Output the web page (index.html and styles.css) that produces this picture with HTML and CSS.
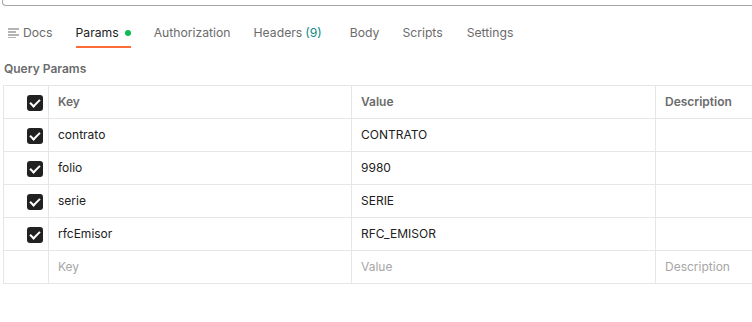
FILE: index.html
```html
<!DOCTYPE html>
<html>

<head lang="en">
    <meta charset="UTF-8">
    <title>Params</title>
    <link rel="stylesheet" href="styles.css">
</head>

<body>
    <div class="url-box"></div>

    <!-- tabs -->
    <ul class="tabs">
        <li class="tab">
            <svg class="docs-icon" width="11" height="10" viewBox="0 0 11 10">
                <path d="M0 1h11M0 4h8M0 7h11M0 10h8" stroke="#6b6b6b" stroke-width="1.2" fill="none" />
            </svg>
            Docs
        </li>
        <li class="tab active">Params <span class="dot"></span></li>
        <li class="tab">Authorization</li>
        <li class="tab">Headers <span class="count">(9)</span></li>
        <li class="tab body-tab">Body</li>
        <li class="tab">Scripts</li>
        <li class="tab settings-tab">Settings</li>
    </ul>

    <h4 class="section-title">Query Params</h4>

    <div class="table-wrap">
        <table class="params">
            <colgroup>
                <col class="c-check">
                <col class="c-key">
                <col class="c-value">
                <col class="c-desc">
            </colgroup>
            <tr class="head">
                <td class="check"><span class="box"></span></td>
                <td>Key</td>
                <td>Value</td>
                <td>Description</td>
            </tr>
            <tr>
                <td class="check"><span class="box"></span></td>
                <td>contrato</td>
                <td>CONTRATO</td>
                <td></td>
            </tr>
            <tr>
                <td class="check"><span class="box"></span></td>
                <td>folio</td>
                <td>9980</td>
                <td></td>
            </tr>
            <tr>
                <td class="check"><span class="box"></span></td>
                <td>serie</td>
                <td>SERIE</td>
                <td></td>
            </tr>
            <tr>
                <td class="check"><span class="box"></span></td>
                <td>rfcEmisor</td>
                <td>RFC_EMISOR</td>
                <td></td>
            </tr>
            <tr class="empty">
                <td class="check"></td>
                <td>Key</td>
                <td>Value</td>
                <td>Description</td>
            </tr>
        </table>
    </div>
</body>

</html>
```

FILE: styles.css
```css
/*reset*/
body,
ul,
li,
h4 {
    margin: 0;
    padding: 0;
}

ul {
    list-style: none;
}

body {
    font: 12px/1.5 Inter, "Noto Sans", sans-serif;
    color: #212121;
    background: #fff;
    overflow: hidden;
    width: 752px;
}

/*url input box, only its bottom shows*/
.url-box {
    height: 6px;
    margin: -1px 0 0 2px;
    border: 1px solid #a6a6a6;
    border-top: 0;
    border-right: 0;
    border-radius: 0 0 0 4px;
}

.tabs {
    display: flex;
    gap: 23px;
    padding-left: 8px;
    margin-top: 14px;
    height: 28px;
}

.tab {
    display: flex;
    align-items: center;
    gap: 4px;
    height: 26px;
    font-size: 12.2px;
    color: #6b6b6b;
    border-bottom: 2px solid transparent;
}

.tab.active {
    color: #212121;
    border-bottom-color: #ff6c37;
}

.body-tab {
    margin-left: 5px;
}

.settings-tab {
    margin-left: 1px;
}

.docs-icon {
    margin-right: 0;
}

.dot {
    width: 6px;
    height: 6px;
    border-radius: 50%;
    background: #0cbb52;
    margin-left: 2px;
}

.count {
    color: #0b8a84;
    margin-left: -1px;
}

.section-title {
    font-size: 12px;
    font-weight: 600;
    color: #6b6b6b;
    padding: 12px 0 0 4px;
    height: 25px;
}

.table-wrap {
    padding-left: 3px;
    overflow: hidden;
}

.params {
    border-collapse: collapse;
    table-layout: fixed;
    width: 860px;
}

.c-check {
    width: 45px;
}

.c-key {
    width: 303px;
}

.c-value {
    width: 304px;
}

.params td {
    height: 32px;
    padding: 0 9px;
    border: 1px solid #e6e6e6;
    vertical-align: middle;
}

.params .head td {
    font-weight: 600;
    color: #6b6b6b;
}

.params td.check {
    padding: 0;
    text-align: right;
    padding-right: 5px;
}

.box {
    display: inline-block;
    width: 16px;
    height: 16px;
    border-radius: 3px;
    background: #212121;
    position: relative;
    vertical-align: middle;
}

.box::after {
    content: "";
    position: absolute;
    left: 5px;
    top: 2px;
    width: 4px;
    height: 8px;
    border: solid #fff;
    border-width: 0 2px 2px 0;
    transform: rotate(45deg);
}

.params .empty td {
    color: #a6a6a6;
}
```
